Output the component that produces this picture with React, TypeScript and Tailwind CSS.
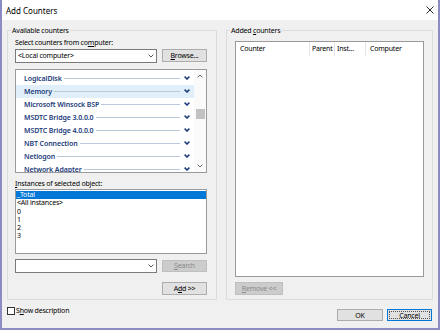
import React from 'react';

const objects = [
  'LogicalDisk',
  'Memory',
  'Microsoft Winsock BSP',
  'MSDTC Bridge 3.0.0.0',
  'MSDTC Bridge 4.0.0.0',
  'NBT Connection',
  'Netlogon',
  'Network Adapter',
];

const instances = ['_Total', '<All instances>', '0', '1', '2', '3'];

const columns = [
  { label: 'Counter', className: 'w-[74px] pl-[4px] border-r' },
  { label: 'Parent', className: 'w-[25px] pl-[2px] border-r' },
  { label: 'Inst...', className: 'w-[31px] pl-[2px] border-r' },
  { label: 'Computer', className: 'flex-1 pl-[4px]' },
];

const Chevron = ({ className, up = false, bold = false }: { className?: string; up?: boolean; bold?: boolean }) => (
  <svg width="6" height="4" viewBox="0 0 6 4" className={className}>
    <path
      d={up ? 'M0.6 3.4 L3 1 L5.4 3.4' : 'M0.6 0.6 L3 3 L5.4 0.6'}
      fill="none"
      stroke="currentColor"
      strokeWidth={bold ? 1.5 : 0.9}
    />
  </svg>
);

const ComboBox = ({ value }: { value?: string }) => (
  <div className="w-[142px] h-[14px] bg-white border border-[#7a7a7a] flex items-center justify-between pl-[2px] pr-[2px]">
    <span>{value}</span>
    <Chevron className="text-[#444]" />
  </div>
);

const Button = ({
  children,
  disabled,
  className = '',
}: {
  children: React.ReactNode;
  disabled?: boolean;
  className?: string;
}) => (
  <div
    className={`flex items-center justify-center border ${
      disabled ? 'bg-[#cccccc] border-[#bfbfbf] text-[#8a8a8a]' : 'bg-[#e1e1e1] border-[#adadad] text-black'
    } ${className}`}
  >
    {children}
  </div>
);

const App = () => {
  return (
    <div className="w-[440px] h-[330px] flex flex-col bg-[#f0f0f0] border-x-2 border-b-2 border-[#8b8bc6] text-[7px] leading-[9px] tracking-[-0.2px] text-black font-['Noto_Sans',sans-serif]">
      {/* title bar */}
      <div className="h-[20px] shrink-0 bg-white flex items-center justify-between pl-[4px] pr-[4px]">
        <span className="text-[8px] tracking-normal">Add Counters</span>
        <svg width="8" height="8" viewBox="0 0 8 8">
          <path d="M0.5 0.5 L7.5 7.5 M7.5 0.5 L0.5 7.5" stroke="#111" strokeWidth="0.9" />
        </svg>
      </div>

      <div className="flex gap-[9px] pl-[5px] pt-[5.5px]">
        {/* Available counters */}
        <fieldset className="w-[210px] h-[274.5px] border border-[#dcdcdc]">
          <legend className="ml-[3px] px-[1px]">Available counters</legend>
          <div className="flex flex-col pl-[7px]">
            <div className="mt-[3.7px] h-[9px]">
              Select counters from co<u>m</u>puter:
            </div>
            <div className="mt-[1.8px] h-[14px] flex items-center gap-[5px]">
              <ComboBox value="<Local computer>" />
              <Button className="w-[45px] h-[13px]">
                <span>
                  <u>B</u>rowse...
                </span>
              </Button>
            </div>

            {/* object list */}
            <div className="mt-[6px] w-[192px] h-[104px] bg-white border border-[#9a9a9a] flex overflow-hidden">
              <div className="flex-1 pt-[2px]">
                {objects.map((name) => (
                  <div
                    key={name}
                    className={`h-[13px] flex items-center pl-[8px] pr-[4px] ${name === 'Memory' ? 'bg-[#e1effb]' : ''}`}
                  >
                    <span className="font-semibold tracking-[-0.1px] text-[#1c3b7a] whitespace-nowrap">{name}</span>
                    <div className="flex-1 h-px bg-[#b9c9d9] ml-[2px] mr-[4px]" />
                    <Chevron bold className="text-[#1c3b7a]" />
                  </div>
                ))}
              </div>
              <div className="w-[12px] bg-[#fafafa] flex flex-col items-center">
                <div className="h-[12px] flex items-center">
                  <Chevron up className="text-[#555]" />
                </div>
                <div className="mt-[27px] w-[9px] h-[10px] bg-[#c2c2c2]" />
                <div className="flex-1" />
                <div className="h-[12px] flex items-center">
                  <Chevron className="text-[#555]" />
                </div>
              </div>
            </div>

            <div className="mt-[5.8px] h-[9px]">
              <u>I</u>nstances of selected object:
            </div>
            <div className="mt-[1.5px] w-[192px] h-[65px] bg-white border border-[#9a9a9a] pt-[1px] leading-[8.2px]">
              {instances.map((inst) => (
                <div
                  key={inst}
                  className={`h-[8.2px] pl-[1px] ${inst === '_Total' ? 'bg-[#0078d7] text-white' : ''}`}
                >
                  {inst}
                </div>
              ))}
            </div>

            <div className="mt-[5px] h-[13px] flex items-center gap-[5px]">
              <ComboBox />
              <Button disabled className="w-[45px] h-[12px]">
                <span>
                  <u>S</u>earch
                </span>
              </Button>
            </div>
            <div className="mt-[9.4px] w-[192px] flex justify-end">
              <Button className="w-[45px] h-[13px]">
                <span>
                  A<u>d</u>d &gt;&gt;
                </span>
              </Button>
            </div>
          </div>
        </fieldset>

        {/* Added counters */}
        <fieldset className="w-[207px] h-[274.5px] border border-[#dcdcdc]">
          <legend className="ml-[3px] px-[1px]">
            Added <u>c</u>ounters
          </legend>
          <div className="flex flex-col pl-[8px]">
            <div className="mt-[6.2px] w-[189px] h-[236px] bg-white border border-[#9a9a9a]">
              <div className="h-[14px] flex">
                {columns.map((col) => (
                  <div key={col.label} className={`flex items-center border-[#e5e5e5] ${col.className}`}>
                    {col.label}
                  </div>
                ))}
              </div>
            </div>
            <Button disabled className="mt-[5px] w-[48px] h-[13px]">
              <span>
                <u>R</u>emove &lt;&lt;
              </span>
            </Button>
          </div>
        </fieldset>
      </div>

      {/* footer */}
      <div className="flex justify-between items-start pl-[5px] pr-[6px]">
        <div className="mt-[6px] flex items-center gap-[1px]">
          <div className="w-[8px] h-[8px] bg-white border border-[#333]" />
          <span>
            S<u>h</u>ow description
          </span>
        </div>
        <div className="mt-[9.3px] flex gap-[4px]">
          <Button className="w-[46px] h-[12px]">OK</Button>
          <div className="w-[45px] h-[12px] border border-[#0078d7] bg-[#e1e1e1] p-[1px]">
            <div className="h-full border border-dotted border-[#555] flex items-center justify-center leading-[7px]">
              Cancel
            </div>
          </div>
        </div>
      </div>
    </div>
  );
};

export default App;
